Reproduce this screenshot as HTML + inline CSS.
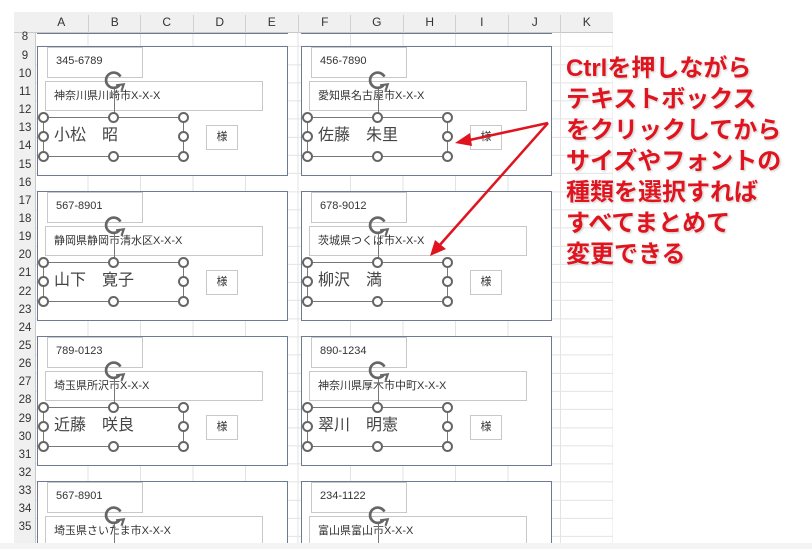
<!DOCTYPE html>
<html><head><meta charset="utf-8"><style>
*{margin:0;padding:0;box-sizing:border-box}
html,body{width:812px;height:549px;overflow:hidden}
body{background:#fff;position:relative;font-family:"Liberation Sans","Noto Sans CJK JP",sans-serif}
.grid{position:absolute;left:36px;top:33px;width:577px;height:516px;
background-image:repeating-linear-gradient(90deg,transparent 0,transparent 51.5px,#e3e3e3 51.5px,#e3e3e3 52.5px),
repeating-linear-gradient(180deg,transparent 0,transparent 17.15px,#e3e3e3 17.15px,#e3e3e3 18.15px);
background-position:0 0,0 -4.15px}
.hdr{position:absolute;left:14px;top:12px;width:599px;height:21px;background:#f0f0f0;border-bottom:1px solid #c8c8c8;z-index:5}
.hdr span{position:absolute;top:3px;width:52.5px;text-align:center;font-size:12px;color:#333;border-left:1px solid #d0d0d0;height:18px}
.rh{position:absolute;left:14px;top:33px;width:22px;height:516px;background:#f0f0f0;border-right:1px solid #c8c8c8;z-index:5}
.rh span{position:absolute;left:0;width:22px;text-align:center;font-size:11.5px;color:#333}
.card{position:absolute;width:251px;height:130px;border:1.5px solid #6e7a90;background:#fff}
.last{height:68px;border-bottom:none;overflow:hidden}
.b{position:absolute;border:1px solid #c8c8c8;background:#fff;font-size:11px;color:#333;padding-left:8px}
.pz{left:9px;top:0;width:96px;height:31px;line-height:27px}
.ad{left:7px;top:34px;width:218px;height:30px;line-height:28px}
.nm{position:absolute;left:5px;top:70px;width:141px;height:40px;border:1.5px solid #777;font-size:16px;color:#444;line-height:36px;padding-left:10px}
.sm{position:absolute;left:168px;top:78px;width:32px;height:25px;border:1px solid #c8c8c8;font-size:11px;line-height:23px;text-align:center;color:#333}
.h{position:absolute;width:11px;height:11px;border:2px solid #666;border-radius:50%;background:#fff}
.ln{position:absolute;left:75.5px;top:40px;width:1.5px;height:30px;background:#777}
.rot{position:absolute;left:65px;top:23px}
.red{position:absolute;left:566px;top:53px;font-size:24px;line-height:31px;color:#e0141e;font-weight:bold;text-shadow:0 0 2px #fff,1px 1px 2px #bbb;white-space:nowrap;z-index:9}
</style></head><body>
<div class="grid"></div>
<div class="hdr">
<span style="left:21px;border-left:none">A</span><span style="left:74px">B</span><span style="left:126px">C</span><span style="left:179px">D</span><span style="left:231px">E</span><span style="left:284px">F</span><span style="left:336px">G</span><span style="left:389px">H</span><span style="left:441px">I</span><span style="left:494px">J</span><span style="left:546px">K</span>
</div>
<div class="rh">
<span style="top:-2px">8</span><span style="top:17px">9</span><span style="top:35px">10</span><span style="top:53px">11</span><span style="top:71px">12</span><span style="top:89px">13</span><span style="top:107px">14</span><span style="top:126px">15</span><span style="top:144px">16</span><span style="top:162px">17</span><span style="top:180px">18</span><span style="top:198px">19</span><span style="top:216px">20</span><span style="top:234px">21</span><span style="top:253px">22</span><span style="top:271px">23</span><span style="top:289px">24</span><span style="top:307px">25</span><span style="top:325px">26</span><span style="top:343px">27</span><span style="top:361px">28</span><span style="top:380px">29</span><span style="top:398px">30</span><span style="top:416px">31</span><span style="top:434px">32</span><span style="top:452px">33</span><span style="top:470px">34</span><span style="top:488px">35</span>
</div>
<div class="card" style="left:37px;top:12px;height:22px;border-top:none"></div>
<div class="card" style="left:301px;top:12px;height:22px;border-top:none"></div>

<div class="card" style="left:37px;top:46px">
<div class="b pz">345-6789</div><div class="b ad">神奈川県川崎市X-X-X</div>
<div class="nm">小松　昭</div><div class="sm">様</div>
<div class="ln"></div>
<svg class="rot" width="24" height="22" viewBox="0 0 22 20"><path d="M15 14 A7 7 0 1 1 16 6" fill="none" stroke="#666" stroke-width="2.5"/><path d="M12 14 L19 13 L17 19" fill="none" stroke="#666" stroke-width="2"/></svg>
<div class="h" style="left:0;top:65px"></div><div class="h" style="left:70px;top:65px"></div><div class="h" style="left:140px;top:65px"></div>
<div class="h" style="left:0;top:84px"></div><div class="h" style="left:140px;top:84px"></div>
<div class="h" style="left:0;top:104px"></div><div class="h" style="left:70px;top:104px"></div><div class="h" style="left:140px;top:104px"></div>
</div>
<div class="card" style="left:301px;top:46px">
<div class="b pz">456-7890</div><div class="b ad">愛知県名古屋市X-X-X</div>
<div class="nm">佐藤　朱里</div><div class="sm">様</div>
<div class="ln"></div>
<svg class="rot" width="24" height="22" viewBox="0 0 22 20"><path d="M15 14 A7 7 0 1 1 16 6" fill="none" stroke="#666" stroke-width="2.5"/><path d="M12 14 L19 13 L17 19" fill="none" stroke="#666" stroke-width="2"/></svg>
<div class="h" style="left:0;top:65px"></div><div class="h" style="left:70px;top:65px"></div><div class="h" style="left:140px;top:65px"></div>
<div class="h" style="left:0;top:84px"></div><div class="h" style="left:140px;top:84px"></div>
<div class="h" style="left:0;top:104px"></div><div class="h" style="left:70px;top:104px"></div><div class="h" style="left:140px;top:104px"></div>
</div>

<div class="card" style="left:37px;top:191px">
<div class="b pz">567-8901</div><div class="b ad">静岡県静岡市清水区X-X-X</div>
<div class="nm">山下　寛子</div><div class="sm">様</div>
<div class="ln"></div>
<svg class="rot" width="24" height="22" viewBox="0 0 22 20"><path d="M15 14 A7 7 0 1 1 16 6" fill="none" stroke="#666" stroke-width="2.5"/><path d="M12 14 L19 13 L17 19" fill="none" stroke="#666" stroke-width="2"/></svg>
<div class="h" style="left:0;top:65px"></div><div class="h" style="left:70px;top:65px"></div><div class="h" style="left:140px;top:65px"></div>
<div class="h" style="left:0;top:84px"></div><div class="h" style="left:140px;top:84px"></div>
<div class="h" style="left:0;top:104px"></div><div class="h" style="left:70px;top:104px"></div><div class="h" style="left:140px;top:104px"></div>
</div>
<div class="card" style="left:301px;top:191px">
<div class="b pz">678-9012</div><div class="b ad">茨城県つくば市X-X-X</div>
<div class="nm">柳沢　満</div><div class="sm">様</div>
<div class="ln"></div>
<svg class="rot" width="24" height="22" viewBox="0 0 22 20"><path d="M15 14 A7 7 0 1 1 16 6" fill="none" stroke="#666" stroke-width="2.5"/><path d="M12 14 L19 13 L17 19" fill="none" stroke="#666" stroke-width="2"/></svg>
<div class="h" style="left:0;top:65px"></div><div class="h" style="left:70px;top:65px"></div><div class="h" style="left:140px;top:65px"></div>
<div class="h" style="left:0;top:84px"></div><div class="h" style="left:140px;top:84px"></div>
<div class="h" style="left:0;top:104px"></div><div class="h" style="left:70px;top:104px"></div><div class="h" style="left:140px;top:104px"></div>
</div>

<div class="card" style="left:37px;top:336px">
<div class="b pz">789-0123</div><div class="b ad">埼玉県所沢市X-X-X</div>
<div class="nm">近藤　咲良</div><div class="sm">様</div>
<div class="ln"></div>
<svg class="rot" width="24" height="22" viewBox="0 0 22 20"><path d="M15 14 A7 7 0 1 1 16 6" fill="none" stroke="#666" stroke-width="2.5"/><path d="M12 14 L19 13 L17 19" fill="none" stroke="#666" stroke-width="2"/></svg>
<div class="h" style="left:0;top:65px"></div><div class="h" style="left:70px;top:65px"></div><div class="h" style="left:140px;top:65px"></div>
<div class="h" style="left:0;top:84px"></div><div class="h" style="left:140px;top:84px"></div>
<div class="h" style="left:0;top:104px"></div><div class="h" style="left:70px;top:104px"></div><div class="h" style="left:140px;top:104px"></div>
</div>
<div class="card" style="left:301px;top:336px">
<div class="b pz">890-1234</div><div class="b ad">神奈川県厚木市中町X-X-X</div>
<div class="nm">翠川　明憲</div><div class="sm">様</div>
<div class="ln"></div>
<svg class="rot" width="24" height="22" viewBox="0 0 22 20"><path d="M15 14 A7 7 0 1 1 16 6" fill="none" stroke="#666" stroke-width="2.5"/><path d="M12 14 L19 13 L17 19" fill="none" stroke="#666" stroke-width="2"/></svg>
<div class="h" style="left:0;top:65px"></div><div class="h" style="left:70px;top:65px"></div><div class="h" style="left:140px;top:65px"></div>
<div class="h" style="left:0;top:84px"></div><div class="h" style="left:140px;top:84px"></div>
<div class="h" style="left:0;top:104px"></div><div class="h" style="left:70px;top:104px"></div><div class="h" style="left:140px;top:104px"></div>
</div>

<div class="card last" style="left:37px;top:481px">
<div class="b pz">567-8901</div><div class="b ad">埼玉県さいたま市X-X-X</div>
<div class="ln"></div>
<svg class="rot" width="24" height="22" viewBox="0 0 22 20"><path d="M15 14 A7 7 0 1 1 16 6" fill="none" stroke="#666" stroke-width="2.5"/><path d="M12 14 L19 13 L17 19" fill="none" stroke="#666" stroke-width="2"/></svg>
<div class="h" style="left:0;top:63px"></div><div class="h" style="left:70px;top:63px"></div><div class="h" style="left:140px;top:63px"></div>
</div>
<div class="card last" style="left:301px;top:481px">
<div class="b pz">234-1122</div><div class="b ad">富山県富山市X-X-X</div>
<div class="ln"></div>
<svg class="rot" width="24" height="22" viewBox="0 0 22 20"><path d="M15 14 A7 7 0 1 1 16 6" fill="none" stroke="#666" stroke-width="2.5"/><path d="M12 14 L19 13 L17 19" fill="none" stroke="#666" stroke-width="2"/></svg>
<div class="h" style="left:0;top:63px"></div><div class="h" style="left:70px;top:63px"></div><div class="h" style="left:140px;top:63px"></div>
</div>

<div style="position:absolute;left:0;top:0;width:812px;height:12px;background:#fff;z-index:6"></div>
<div style="position:absolute;left:613px;top:12px;width:199px;height:537px;background:#fff;z-index:6"></div>
<div style="position:absolute;left:0;top:543px;width:812px;height:6px;background:#f4f4f4;z-index:7"></div>

<svg style="position:absolute;left:0;top:0;z-index:8" width="812" height="549">
<g stroke="#e0141e" stroke-width="2.5" fill="none"><line x1="548" y1="123" x2="465" y2="141"/><line x1="548" y1="123" x2="438" y2="247"/></g>
<polygon points="455,143 470,133 472,146" fill="#e0141e"/>
<polygon points="430,256 435,240 446,249" fill="#e0141e"/>
</svg>
<div class="red">Ctrlを押しながら<br>テキストボックス<br>をクリックしてから<br>サイズやフォントの<br>種類を選択すれば<br>すべてまとめて<br>変更できる</div>
</body></html>
